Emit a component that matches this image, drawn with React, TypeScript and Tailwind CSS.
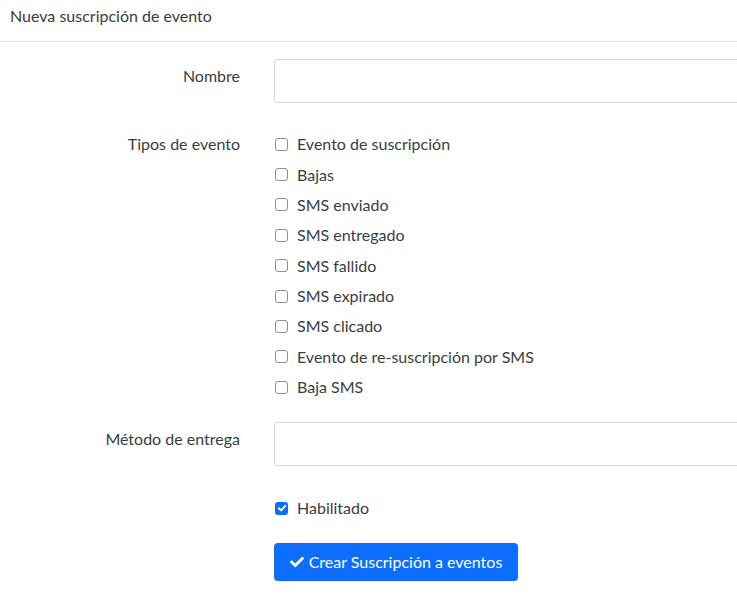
import React from "react";

const tipos = [
  "Evento de suscripción",
  "Bajas",
  "SMS enviado",
  "SMS entregado",
  "SMS fallido",
  "SMS expirado",
  "SMS clicado",
  "Evento de re-suscripción por SMS",
  "Baja SMS",
];

function Box({ checked }: { checked?: boolean }) {
  if (checked) {
    return (
      <span className="flex h-[13px] w-[13px] shrink-0 items-center justify-center rounded-[3px] bg-[#0d6efd]">
        <svg viewBox="0 0 20 20" className="h-[12px] w-[12px]">
          <path d="M5 10.5l3.5 3.5L15.5 6.5" fill="none" stroke="#fff" strokeWidth="3.4" strokeLinecap="round" strokeLinejoin="round" />
        </svg>
      </span>
    );
  }
  return <span className="h-[13px] w-[13px] shrink-0 rounded-[3px] border border-[#8a9097] bg-white" />;
}

export default function App() {
  return (
    <div
      className="w-[737px] h-[602px] overflow-hidden bg-white text-[16px] text-[#3a3d40]"
      style={{ fontFamily: "Lato, 'Noto Sans', sans-serif" }}
    >
      <div className="h-[42px] border-b border-[#e3e4e6] px-[10px] pt-[6px] leading-[20px]">
        Nueva suscripción de evento
      </div>

      <div className="flex mt-[17px]">
        <div className="w-[240px] shrink-0 pt-[7px] text-right leading-[20px]">Nombre</div>
        <div className="ml-[34px] h-[44px] w-[600px] shrink-0 rounded-[3px] border border-[#d5d8dd]" />
      </div>

      <div className="flex mt-[26px]">
        <div className="w-[240px] shrink-0 text-right leading-[30.375px]">Tipos de evento</div>
        <div className="ml-[35px] flex flex-col">
          {tipos.map((t) => (
            <div key={t} className="flex h-[30.375px] items-center gap-[9px]">
              <Box />
              <span>{t}</span>
            </div>
          ))}
        </div>
      </div>

      <div className="flex mt-[20px]">
        <div className="w-[240px] shrink-0 pt-[7px] text-right leading-[20px]">Método de entrega</div>
        <div className="ml-[34px] h-[44px] w-[600px] shrink-0 rounded-[3px] border border-[#d5d8dd]" />
      </div>

      <div className="ml-[275px] mt-[27px] flex h-[30px] items-center gap-[9px]">
        <Box checked />
        <span>Habilitado</span>
      </div>

      <div className="ml-[274px] mt-[20px]">
        <button className="flex h-[38px] w-[244px] items-center justify-center gap-[5px] rounded-[4px] bg-[#0d6efd] pb-[1px] text-[16px] text-white">
          <svg viewBox="0 0 512 512" className="h-[14px] w-[14px]" fill="#fff">
            <path d="M173.898 439.404l-166.4-166.4c-9.997-9.997-9.997-26.206 0-36.204l36.203-36.204c9.997-9.998 26.207-9.998 36.204 0L192 312.69 432.095 72.596c9.997-9.997 26.207-9.997 36.204 0l36.203 36.204c9.997 9.997 9.997 26.206 0 36.204l-294.4 294.401c-9.998 9.997-26.207 9.997-36.204-.001z" />
          </svg>
          <span>Crear Suscripción a eventos</span>
        </button>
      </div>
    </div>
  );
}
